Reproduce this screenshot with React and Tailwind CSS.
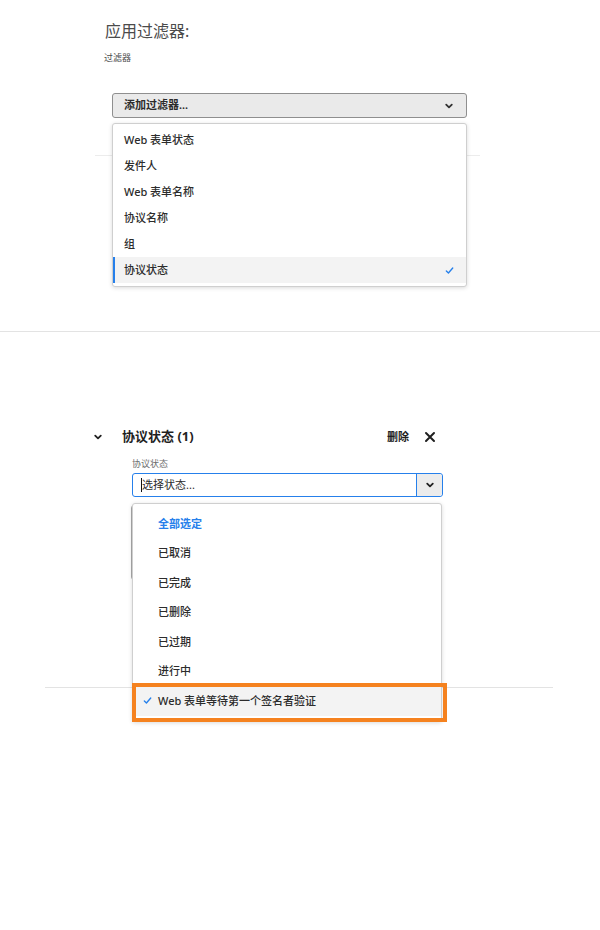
import React from "react";

const Chevron = ({ className = "" }) => (
  <svg viewBox="0 0 10 10" className={className} fill="none" stroke="currentColor" strokeWidth="1.8" strokeLinecap="round" strokeLinejoin="round">
    <path d="M2.2 3.6 L5 6.4 L7.8 3.6" />
  </svg>
);

const Check = ({ className = "" }) => (
  <svg viewBox="0 0 10 10" className={className} fill="none" stroke="currentColor" strokeWidth="1.5" strokeLinecap="round" strokeLinejoin="round">
    <path d="M1.5 5.6 L3.8 7.8 L8.6 2.2" />
  </svg>
);

const Close = ({ className = "" }) => (
  <svg viewBox="0 0 12 12" className={className} fill="none" stroke="currentColor" strokeWidth="2" strokeLinecap="round">
    <path d="M2 2 L10 10 M10 2 L2 10" />
  </svg>
);

const menu1 = ["Web 表单状态", "发件人", "Web 表单名称", "协议名称", "组", "协议状态"];
const menu2 = ["已取消", "已完成", "已删除", "已过期", "进行中"];

export default function App() {
  return (
    <div className="w-[600px] min-h-[930px] bg-white text-[#2c2c2c] font-['Noto_Sans','Noto_Sans_CJK_SC',sans-serif]">
      {/* Section 1 */}
      <div className="ml-[95px] w-[385px] pt-[21px] border-b border-[#ececec]">
        <div className="pl-[10px] text-[16px] leading-[20px] text-[#4b4b4b]">应用过滤器:</div>
        <div className="pl-[9px] mt-[10px] text-[9px] leading-[14px] text-[#4b4b4b]">过滤器</div>
        <div className="relative ml-[17px] mt-[28px] w-[355px]">
          <div className="h-[25px] flex items-center rounded-[3px] border border-[#8f8f8f] bg-[#eaeaea] pl-[11px] pr-[12px]">
            <span className="text-[11px] font-semibold text-[#2c2c2c]">添加过滤器...</span>
            <Chevron className="ml-auto w-[10px] h-[10px] text-[#333]" />
          </div>
          <div className="absolute z-10 left-0 top-[30px] w-[355px] bg-white border border-[#cfcfcf] rounded-[3px] shadow-[0_1px_4px_rgba(0,0,0,0.15)] py-[3px]">
            {menu1.map((t, i) => {
              const sel = i === menu1.length - 1;
              return (
                <div
                  key={t}
                  className={
                    sel
                      ? "h-[26px] flex items-center pl-[9px] pr-[12px] bg-[#f3f3f3] border-l-2 border-[#2680eb]"
                      : "h-[26px] flex items-center pl-[11px] pr-[12px]"
                  }
                >
                  <span className="text-[11px] font-medium text-[#2c2c2c]">{t}</span>
                  {sel && <Check className="ml-auto w-[9px] h-[9px] text-[#2680eb]" />}
                </div>
              );
            })}
          </div>
        </div>
        <div className="h-[37px]" />
      </div>
      <div className="h-[175px]" />
      <div className="border-b border-[#e3e3e3]" />

      {/* Section 2 */}
      <div className="mt-[95px] w-[436px] pl-[93px] flex items-center h-[20px]">
        <Chevron className="w-[10px] h-[10px] text-[#222]" />
        <span className="ml-[19px] text-[13px] font-bold text-[#1f1f1f]">协议状态 (1)</span>
        <span className="ml-auto text-[11px] font-bold text-[#1f1f1f]">删除</span>
        <Close className="ml-[15px] w-[12px] h-[12px] text-[#1f1f1f]" />
      </div>
      <div className="ml-[132px] mt-[11px] text-[9px] leading-[12px] text-[#6e6e6e]">协议状态</div>
      <div className="relative ml-[132px] mt-[3px] w-[311px]">
        <div className="h-[24px] flex rounded-[3px] border border-[#2680eb] bg-white">
          <div className="flex-1 flex items-center pl-[8px]">
            <span className="w-[1px] h-[14px] bg-[#111]" />
            <span className="text-[11px] text-[#2c2c2c]">选择状态...</span>
          </div>
          <div className="w-[26px] flex items-center justify-center border-l border-[#2680eb] bg-[#ececec] rounded-r-[3px]">
            <Chevron className="w-[10px] h-[10px] text-[#222]" />
          </div>
        </div>
        <div className="absolute z-10 left-0 top-[30px] w-[310px] bg-white border border-[#cfcfcf] rounded-[3px] shadow-[0_1px_4px_rgba(0,0,0,0.15)] py-[5px]">
          <div className="h-[29.5px] flex items-center pl-[25px]">
            <span className="text-[11px] font-bold text-[#2680eb]">全部选定</span>
          </div>
          {menu2.map((t) => (
            <div key={t} className="h-[29.5px] flex items-center pl-[25px]">
              <span className="text-[11px] font-medium text-[#2c2c2c]">{t}</span>
            </div>
          ))}
          <div className="h-[29.5px] flex items-center pl-[10px] bg-[#f3f3f3]">
            <Check className="w-[9px] h-[9px] text-[#2680eb]" />
            <span className="ml-[6px] text-[11px] font-medium text-[#2c2c2c]">Web 表单等待第一个签名者验证</span>
          </div>
        </div>
        <div className="absolute z-20 left-0 top-[210px] w-[315px] h-[39px] border-[4px] border-[#f5821f]" />
      </div>
      <div className="ml-[131px] mt-[8px] w-[300px] h-[75px] border border-[#a8a8a8] rounded-[3px]" />
      <div className="h-[107px]" />
      <div className="ml-[45px] w-[508px] border-b border-[#e3e3e3]" />
    </div>
  );
}
